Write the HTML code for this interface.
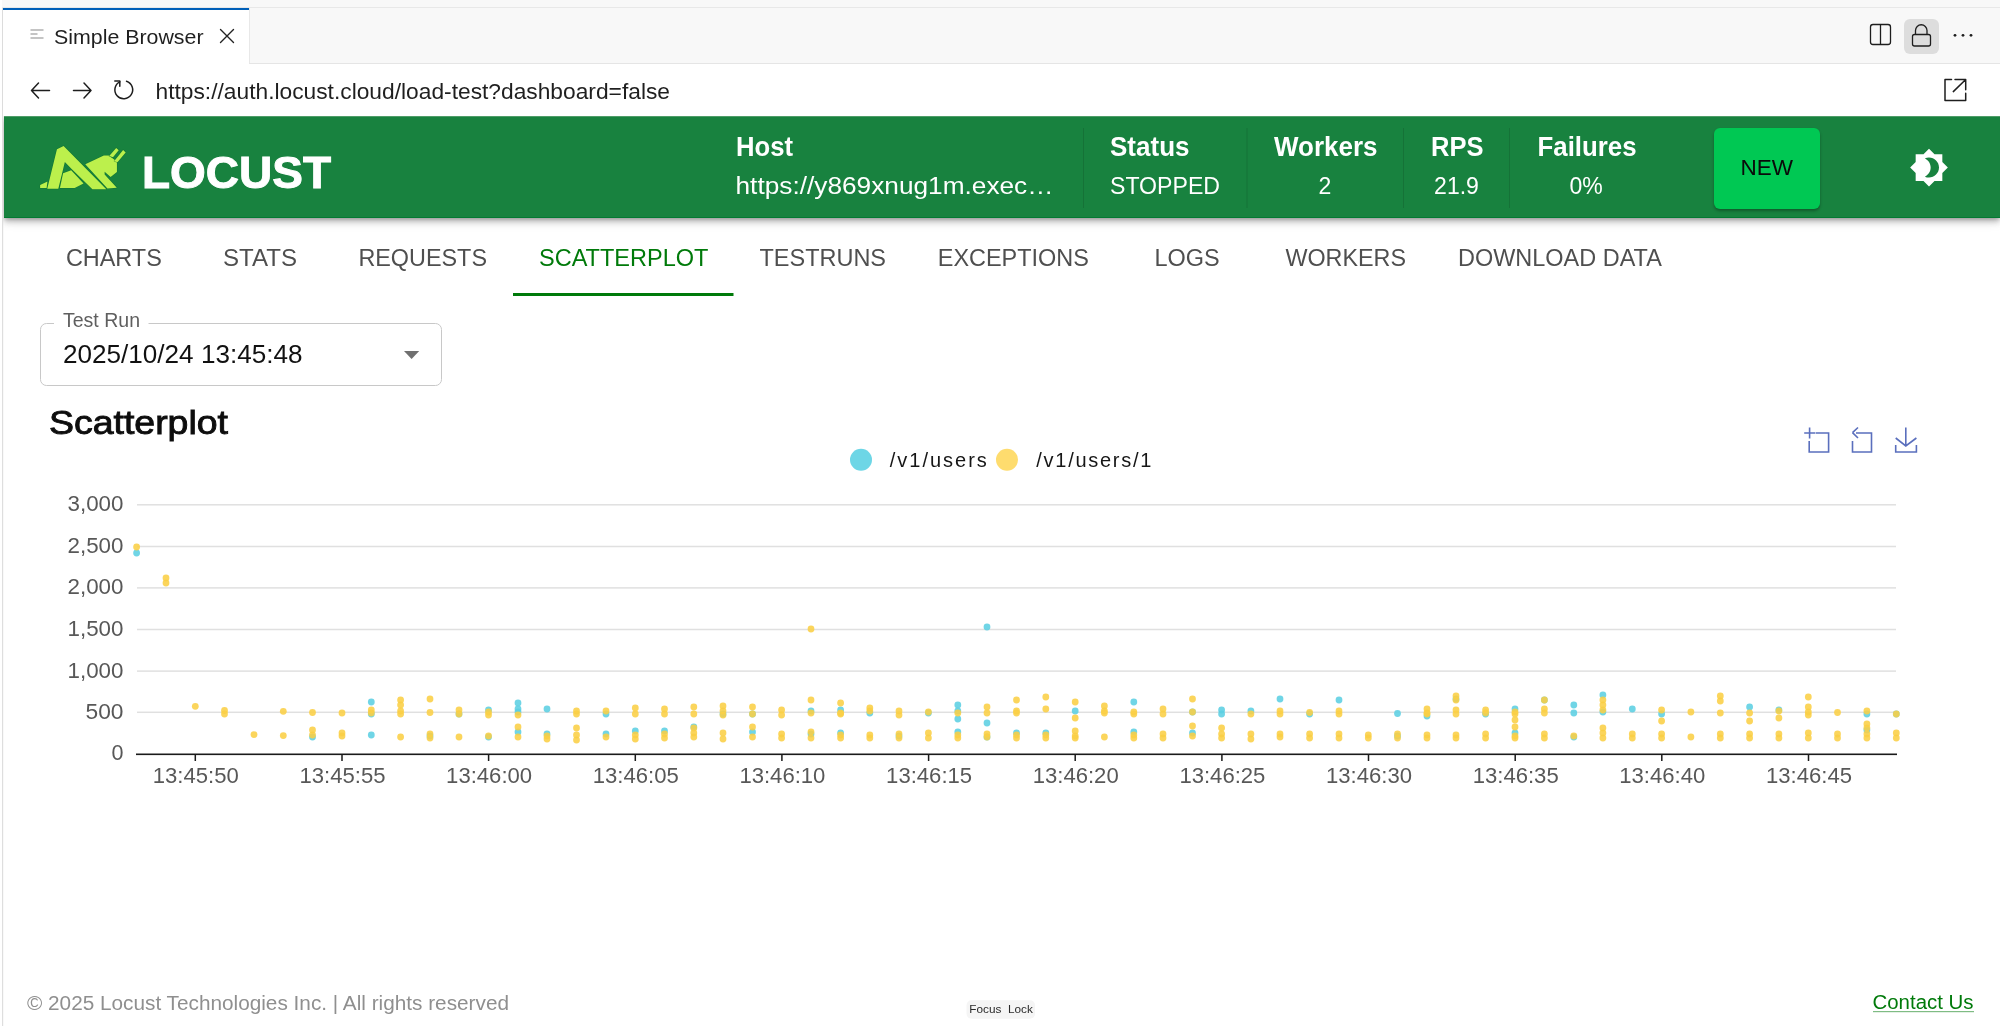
<!DOCTYPE html>
<html><head><meta charset="utf-8">
<style>
*{box-sizing:border-box;margin:0;padding:0}
html,body{width:2000px;height:1026px;overflow:hidden;background:#fff;font-family:"Liberation Sans",sans-serif}
#hdr{position:absolute;left:4px;top:116px;width:1996px;height:102px;clip-path:inset(0 -30px -40px -30px);background:#18823f;box-shadow:0 2px 4px -1px rgba(0,0,0,.25),0 4px 6px 0 rgba(0,0,0,.17),0 2px 12px 0 rgba(0,0,0,.14);border-top:1px solid #4f9d68;border-bottom:1px solid #027a32}
#new{position:absolute;left:1714px;top:128px;width:106px;height:80.5px;background:#00c853;border-radius:6px;box-shadow:0 2px 3px rgba(0,0,0,.3)}
svg{position:absolute;left:0;top:0;will-change:transform}
</style></head><body>
<svg width="2000" height="116" style="position:absolute;left:0;top:0" font-family="Liberation Sans">
<rect x="0" y="0" width="2000" height="64" fill="#f8f8f8"/>
<rect x="0" y="63" width="2000" height="1" fill="#e5e5e5"/>
<rect x="0" y="7" width="2000" height="1" fill="#e8e8e8"/>
<rect x="3" y="8" width="246" height="56" fill="#ffffff"/>
<rect x="2" y="8" width="247" height="2" fill="#005fb8"/>
<rect x="249" y="8" width="1" height="55" fill="#e8e8e8"/>
<rect x="3" y="64" width="1997" height="52" fill="#ffffff"/>
<rect x="0" y="0" width="2" height="1026" fill="#ffffff"/>
<rect x="2" y="8" width="1" height="1018" fill="#dcdcdc"/>
<g fill="#c4c4c4"><rect x="30.5" y="29" width="13" height="2"/><rect x="30.5" y="33" width="7" height="2"/><rect x="30.5" y="37" width="13" height="2"/></g>
<g stroke="#222" stroke-width="1.4" fill="none" stroke-linecap="round"><path d="M220.5 29.5 L233.5 42.5 M233.5 29.5 L220.5 42.5"/></g>
<g stroke="#1e1e1e" stroke-width="1.3" fill="none">
 <rect x="1870.5" y="24.5" width="20" height="20" rx="2.5"/>
 <path d="M1880.5 24.5 V44.5"/>
</g>
<rect x="1904" y="19" width="35" height="35" rx="6" fill="#dddddd"/>
<g stroke="#1e1e1e" stroke-width="1.3" fill="none">
 <rect x="1912.5" y="34.5" width="18" height="11.5" rx="2"/>
 <path d="M1915.5 34.5 V30.5 A5.75 5.75 0 0 1 1927 30.5 V34.5"/>
</g>
<g fill="#1e1e1e"><circle cx="1955" cy="35.3" r="1.4"/><circle cx="1963" cy="35.3" r="1.4"/><circle cx="1971" cy="35.3" r="1.4"/></g>
<g stroke="#1e1e1e" stroke-width="1.5" fill="none" stroke-linecap="round" stroke-linejoin="round">
 <path d="M31.5 90.5 H49.5 M38.5 83 L31.5 90.5 L38.5 98"/>
 <path d="M73.5 90.5 H91 M84 83 L91 90.5 L84 98"/>
 <path d="M126.5 81.3 A8.9 8.9 0 1 1 119.8 81.8"/>
 <path d="M114.8 81 H119.8 V86.2"/>
 <path d="M1951.5 79.5 H1945 V100.4 H1965.7 V93.2 M1955 79.5 H1965.7 V89.7 M1953.3 91.6 L1965.2 80"/>
</g>
<text x="54" y="44" font-size="21" fill="#1f1f1f" textLength="149.5" lengthAdjust="spacingAndGlyphs">Simple Browser</text><text x="155.5" y="98.5" font-size="22.5" fill="#1f1f1f" textLength="514.5" lengthAdjust="spacingAndGlyphs">https://auth.locust.cloud/load-test?dashboard=false</text></svg>
<div id="hdr"></div>
<div id="new"></div>
<svg style="position:absolute;left:30px;top:135px" width="110" height="65" viewBox="0 0 1736 1026">
<g fill="#bcf04c" stroke="#0e6f2a" stroke-width="16" stroke-opacity="0.55" paint-order="stroke" stroke-linejoin="round">
<path d="M160 790 L275 735 L262 835 L160 835 Z"/>
<path d="M272 850 L425 225 L530 172 L1205 855 L985 855 L665 545 L550 425 L447 850 Z"/>
<path d="M472 835 L522 605 L650 555 L845 765 L705 835 Z"/>
<path d="M872 462 L1165 322 L1242 322 L1372 418 L1372 585 L1272 662 L1178 580 L1178 625 L1370 832 L1222 845 Z"/>
<path d="M1250 330 L1360 205 L1400 240 L1310 350 Z"/>
<path d="M1330 410 L1470 235 L1510 275 L1380 430 Z"/>
</g></svg>
<svg width="2000" height="1026" style="position:absolute;left:0;top:0;top:0" font-family="Liberation Sans">
<rect x="0" y="116" width="2" height="910" fill="#ffffff"/>
<rect x="2" y="116" width="1.2" height="910" fill="#dedede"/>
<text x="142" y="187.5" font-size="45" fill="#ffffff" font-weight="bold" textLength="189" lengthAdjust="spacingAndGlyphs" stroke="#fff" stroke-width="1">LOCUST</text><text x="736" y="155.5" font-size="27" fill="#fff" font-weight="bold" textLength="57" lengthAdjust="spacingAndGlyphs">Host</text><text x="735.5" y="194" font-size="23" fill="#fff" textLength="318" lengthAdjust="spacingAndGlyphs">https://y869xnug1m.exec…</text><text x="1110" y="155.5" font-size="27" fill="#fff" font-weight="bold" textLength="79.5" lengthAdjust="spacingAndGlyphs">Status</text><text x="1110" y="193.5" font-size="23" fill="#fff" textLength="110" lengthAdjust="spacingAndGlyphs">STOPPED</text><text x="1274" y="155.5" font-size="27" fill="#fff" font-weight="bold" textLength="103.5" lengthAdjust="spacingAndGlyphs">Workers</text><text x="1325" y="193.5" font-size="23" fill="#fff" text-anchor="middle">2</text><text x="1431" y="155.5" font-size="27" fill="#fff" font-weight="bold" textLength="52.5" lengthAdjust="spacingAndGlyphs">RPS</text><text x="1456.5" y="193.5" font-size="23" fill="#fff" text-anchor="middle">21.9</text><text x="1537.5" y="155.5" font-size="27" fill="#fff" font-weight="bold" textLength="99" lengthAdjust="spacingAndGlyphs">Failures</text><text x="1586" y="193.5" font-size="23" fill="#fff" text-anchor="middle">0%</text><rect x="1083.0" y="128" width="1" height="80" fill="#000" fill-opacity="0.12"/><rect x="1246.5" y="128" width="1" height="80" fill="#000" fill-opacity="0.12"/><rect x="1403.0" y="128" width="1" height="80" fill="#000" fill-opacity="0.12"/><rect x="1509.0" y="128" width="1" height="80" fill="#000" fill-opacity="0.12"/><text x="1740.5" y="175" font-size="22.7" fill="#0a0a0a" textLength="52.5" lengthAdjust="spacingAndGlyphs">NEW</text><g transform="translate(1909,147.6) scale(1.6667)"><path fill="#fff" d="M20 8.69V4h-4.69L12 .69 8.69 4H4v4.69L.69 12 4 15.31V20h4.69L12 23.31 15.31 20H20v-4.69L23.31 12 20 8.69zM12 18c-.89 0-1.74-.2-2.5-.55C11.56 16.5 13 14.42 13 12s-1.44-4.5-3.5-5.45C10.26 6.2 11.11 6 12 6c3.31 0 6 2.69 6 6s-2.69 6-6 6z"/></g><text x="65.9" y="265.5" font-size="23.5" fill="#4f4f4f" textLength="95.9" lengthAdjust="spacingAndGlyphs">CHARTS</text><text x="223" y="265.5" font-size="23.5" fill="#4f4f4f" textLength="74" lengthAdjust="spacingAndGlyphs">STATS</text><text x="358.4" y="265.5" font-size="23.5" fill="#4f4f4f" textLength="128.6" lengthAdjust="spacingAndGlyphs">REQUESTS</text><text x="539" y="265.5" font-size="23.5" fill="#007a0a" textLength="169.4" lengthAdjust="spacingAndGlyphs">SCATTERPLOT</text><text x="759.5" y="265.5" font-size="23.5" fill="#4f4f4f" textLength="126.5" lengthAdjust="spacingAndGlyphs">TESTRUNS</text><text x="937.75" y="265.5" font-size="23.5" fill="#4f4f4f" textLength="151.2" lengthAdjust="spacingAndGlyphs">EXCEPTIONS</text><text x="1154.5" y="265.5" font-size="23.5" fill="#4f4f4f" textLength="65.2" lengthAdjust="spacingAndGlyphs">LOGS</text><text x="1285.4" y="265.5" font-size="23.5" fill="#4f4f4f" textLength="120.6" lengthAdjust="spacingAndGlyphs">WORKERS</text><text x="1458" y="265.5" font-size="23.5" fill="#4f4f4f" textLength="203.8" lengthAdjust="spacingAndGlyphs">DOWNLOAD DATA</text><rect x="513" y="293" width="220.5" height="3" fill="#007a0a"/><path d="M54 323.5 H46.5 A6 6 0 0 0 40.5 329.5 V379.5 A6 6 0 0 0 46.5 385.5 H435.5 A6 6 0 0 0 441.5 379.5 V329.5 A6 6 0 0 0 435.5 323.5 H148.5" fill="none" stroke="#c8c8c8" stroke-width="1"/><text x="63" y="326.8" font-size="19.5" fill="#5f5f5f" textLength="77" lengthAdjust="spacingAndGlyphs">Test Run</text><text x="63" y="362.8" font-size="26" fill="#111" textLength="239.5" lengthAdjust="spacingAndGlyphs">2025/10/24 13:45:48</text><path d="M404 351 H419.2 L411.6 359 Z" fill="#707070"/><text x="49" y="433.5" font-size="34" fill="#0d0d0d" textLength="179" lengthAdjust="spacingAndGlyphs" stroke="#0d0d0d" stroke-width="0.9">Scatterplot</text><circle cx="861" cy="459.7" r="11" fill="#6dd6e6"/><circle cx="1007" cy="459.7" r="11" fill="#fedc6e"/><text x="889.8" y="466.7" font-size="20" fill="#161616" textLength="97" lengthAdjust="spacing">/v1/users</text><text x="1036.3" y="466.7" font-size="20" fill="#161616" textLength="115" lengthAdjust="spacing">/v1/users/1</text><g stroke="#5a6fbd" stroke-width="1.6" fill="none">
<path d="M1804.2 433 H1815 M1809.6 427.6 V438.4 M1815.5 433 H1828.6 V452 H1809.2 V441"/>
<path d="M1856 433 H1871.5 V452 H1852.5 V441 M1852.5 432.7 L1858 427.5 M1852.5 432.7 L1858 438"/>
<path d="M1905.8 427.5 V446 M1895.7 438 L1905.8 446 L1916.4 438 M1895.7 445 V452 H1916.4 V445"/>
</g><rect x="137" y="504.05" width="1759" height="1.5" fill="#e0e0e0"/><text x="67.5" y="511.2" font-size="22" fill="#585858" textLength="56" lengthAdjust="spacingAndGlyphs">3,000</text><rect x="137" y="545.75" width="1759" height="1.5" fill="#e0e0e0"/><text x="67.5" y="552.9" font-size="22" fill="#585858" textLength="56" lengthAdjust="spacingAndGlyphs">2,500</text><rect x="137" y="587.15" width="1759" height="1.5" fill="#e0e0e0"/><text x="67.5" y="594.3" font-size="22" fill="#585858" textLength="56" lengthAdjust="spacingAndGlyphs">2,000</text><rect x="137" y="628.75" width="1759" height="1.5" fill="#e0e0e0"/><text x="67.5" y="635.9" font-size="22" fill="#585858" textLength="56" lengthAdjust="spacingAndGlyphs">1,500</text><rect x="137" y="670.35" width="1759" height="1.5" fill="#e0e0e0"/><text x="67.5" y="677.5" font-size="22" fill="#585858" textLength="56" lengthAdjust="spacingAndGlyphs">1,000</text><rect x="137" y="711.55" width="1759" height="1.5" fill="#e0e0e0"/><text x="85.5" y="718.6999999999999" font-size="22" fill="#585858" textLength="38" lengthAdjust="spacingAndGlyphs">500</text><text x="111.5" y="760.3" font-size="22" fill="#585858" textLength="12" lengthAdjust="spacingAndGlyphs">0</text><rect x="136" y="753.5" width="1761" height="1.6" fill="#1a1a1a"/><rect x="194.55" y="754" width="1.5" height="7" fill="#1a1a1a"/><text x="152.8" y="782.6" font-size="21.7" fill="#585858" textLength="86" lengthAdjust="spacingAndGlyphs">13:45:50</text><rect x="341.25" y="754" width="1.5" height="7" fill="#1a1a1a"/><text x="299.5" y="782.6" font-size="21.7" fill="#585858" textLength="86" lengthAdjust="spacingAndGlyphs">13:45:55</text><rect x="487.85" y="754" width="1.5" height="7" fill="#1a1a1a"/><text x="446.1" y="782.6" font-size="21.7" fill="#585858" textLength="86" lengthAdjust="spacingAndGlyphs">13:46:00</text><rect x="634.55" y="754" width="1.5" height="7" fill="#1a1a1a"/><text x="592.8" y="782.6" font-size="21.7" fill="#585858" textLength="86" lengthAdjust="spacingAndGlyphs">13:46:05</text><rect x="781.15" y="754" width="1.5" height="7" fill="#1a1a1a"/><text x="739.4" y="782.6" font-size="21.7" fill="#585858" textLength="86" lengthAdjust="spacingAndGlyphs">13:46:10</text><rect x="927.85" y="754" width="1.5" height="7" fill="#1a1a1a"/><text x="886.1" y="782.6" font-size="21.7" fill="#585858" textLength="86" lengthAdjust="spacingAndGlyphs">13:46:15</text><rect x="1074.45" y="754" width="1.5" height="7" fill="#1a1a1a"/><text x="1032.7" y="782.6" font-size="21.7" fill="#585858" textLength="86" lengthAdjust="spacingAndGlyphs">13:46:20</text><rect x="1221.15" y="754" width="1.5" height="7" fill="#1a1a1a"/><text x="1179.4" y="782.6" font-size="21.7" fill="#585858" textLength="86" lengthAdjust="spacingAndGlyphs">13:46:25</text><rect x="1367.75" y="754" width="1.5" height="7" fill="#1a1a1a"/><text x="1326.0" y="782.6" font-size="21.7" fill="#585858" textLength="86" lengthAdjust="spacingAndGlyphs">13:46:30</text><rect x="1514.45" y="754" width="1.5" height="7" fill="#1a1a1a"/><text x="1472.7" y="782.6" font-size="21.7" fill="#585858" textLength="86" lengthAdjust="spacingAndGlyphs">13:46:35</text><rect x="1661.05" y="754" width="1.5" height="7" fill="#1a1a1a"/><text x="1619.3" y="782.6" font-size="21.7" fill="#585858" textLength="86" lengthAdjust="spacingAndGlyphs">13:46:40</text><rect x="1807.75" y="754" width="1.5" height="7" fill="#1a1a1a"/><text x="1766.0" y="782.6" font-size="21.7" fill="#585858" textLength="86" lengthAdjust="spacingAndGlyphs">13:46:45</text><circle cx="136.6" cy="553" r="3.4" fill="#5ccfe2" fill-opacity="0.88"/>
<circle cx="312.5" cy="737" r="3.4" fill="#5ccfe2" fill-opacity="0.88"/>
<circle cx="371.3" cy="702" r="3.4" fill="#5ccfe2" fill-opacity="0.88"/>
<circle cx="371.3" cy="714" r="3.4" fill="#5ccfe2" fill-opacity="0.88"/>
<circle cx="371.3" cy="735" r="3.4" fill="#5ccfe2" fill-opacity="0.88"/>
<circle cx="430" cy="736" r="3.4" fill="#5ccfe2" fill-opacity="0.88"/>
<circle cx="459" cy="714" r="3.4" fill="#5ccfe2" fill-opacity="0.88"/>
<circle cx="488.5" cy="710" r="3.4" fill="#5ccfe2" fill-opacity="0.88"/>
<circle cx="488.5" cy="737" r="3.4" fill="#5ccfe2" fill-opacity="0.88"/>
<circle cx="518" cy="703" r="3.4" fill="#5ccfe2" fill-opacity="0.88"/>
<circle cx="518" cy="709" r="3.4" fill="#5ccfe2" fill-opacity="0.88"/>
<circle cx="518" cy="712" r="3.4" fill="#5ccfe2" fill-opacity="0.88"/>
<circle cx="518" cy="732" r="3.4" fill="#5ccfe2" fill-opacity="0.88"/>
<circle cx="547" cy="709" r="3.4" fill="#5ccfe2" fill-opacity="0.88"/>
<circle cx="547" cy="734" r="3.4" fill="#5ccfe2" fill-opacity="0.88"/>
<circle cx="606" cy="714" r="3.4" fill="#5ccfe2" fill-opacity="0.88"/>
<circle cx="606" cy="734" r="3.4" fill="#5ccfe2" fill-opacity="0.88"/>
<circle cx="635.3" cy="731" r="3.4" fill="#5ccfe2" fill-opacity="0.88"/>
<circle cx="664.5" cy="731" r="3.4" fill="#5ccfe2" fill-opacity="0.88"/>
<circle cx="693.8" cy="727" r="3.4" fill="#5ccfe2" fill-opacity="0.88"/>
<circle cx="723" cy="714" r="3.4" fill="#5ccfe2" fill-opacity="0.88"/>
<circle cx="752.5" cy="714" r="3.4" fill="#5ccfe2" fill-opacity="0.88"/>
<circle cx="752.5" cy="732" r="3.4" fill="#5ccfe2" fill-opacity="0.88"/>
<circle cx="811" cy="711" r="3.4" fill="#5ccfe2" fill-opacity="0.88"/>
<circle cx="811" cy="734" r="3.4" fill="#5ccfe2" fill-opacity="0.88"/>
<circle cx="840.6" cy="710" r="3.4" fill="#5ccfe2" fill-opacity="0.88"/>
<circle cx="840.6" cy="733" r="3.4" fill="#5ccfe2" fill-opacity="0.88"/>
<circle cx="869.8" cy="713" r="3.4" fill="#5ccfe2" fill-opacity="0.88"/>
<circle cx="899" cy="736" r="3.4" fill="#5ccfe2" fill-opacity="0.88"/>
<circle cx="928.4" cy="713" r="3.4" fill="#5ccfe2" fill-opacity="0.88"/>
<circle cx="957.8" cy="705" r="3.4" fill="#5ccfe2" fill-opacity="0.88"/>
<circle cx="957.8" cy="711" r="3.4" fill="#5ccfe2" fill-opacity="0.88"/>
<circle cx="957.8" cy="719" r="3.4" fill="#5ccfe2" fill-opacity="0.88"/>
<circle cx="957.8" cy="732" r="3.4" fill="#5ccfe2" fill-opacity="0.88"/>
<circle cx="987" cy="627" r="3.4" fill="#5ccfe2" fill-opacity="0.88"/>
<circle cx="987" cy="723" r="3.4" fill="#5ccfe2" fill-opacity="0.88"/>
<circle cx="987" cy="737" r="3.4" fill="#5ccfe2" fill-opacity="0.88"/>
<circle cx="1016.5" cy="733" r="3.4" fill="#5ccfe2" fill-opacity="0.88"/>
<circle cx="1045.8" cy="733" r="3.4" fill="#5ccfe2" fill-opacity="0.88"/>
<circle cx="1075.2" cy="711" r="3.4" fill="#5ccfe2" fill-opacity="0.88"/>
<circle cx="1133.8" cy="702" r="3.4" fill="#5ccfe2" fill-opacity="0.88"/>
<circle cx="1133.8" cy="732" r="3.4" fill="#5ccfe2" fill-opacity="0.88"/>
<circle cx="1192.5" cy="712" r="3.4" fill="#5ccfe2" fill-opacity="0.88"/>
<circle cx="1192.5" cy="733" r="3.4" fill="#5ccfe2" fill-opacity="0.88"/>
<circle cx="1221.6" cy="710" r="3.4" fill="#5ccfe2" fill-opacity="0.88"/>
<circle cx="1221.6" cy="714" r="3.4" fill="#5ccfe2" fill-opacity="0.88"/>
<circle cx="1250.9" cy="711" r="3.4" fill="#5ccfe2" fill-opacity="0.88"/>
<circle cx="1280" cy="699" r="3.4" fill="#5ccfe2" fill-opacity="0.88"/>
<circle cx="1309.6" cy="714" r="3.4" fill="#5ccfe2" fill-opacity="0.88"/>
<circle cx="1339" cy="700" r="3.4" fill="#5ccfe2" fill-opacity="0.88"/>
<circle cx="1397.5" cy="713.5" r="3.4" fill="#5ccfe2" fill-opacity="0.88"/>
<circle cx="1397.5" cy="736" r="3.4" fill="#5ccfe2" fill-opacity="0.88"/>
<circle cx="1427" cy="716" r="3.4" fill="#5ccfe2" fill-opacity="0.88"/>
<circle cx="1456" cy="699" r="3.4" fill="#5ccfe2" fill-opacity="0.88"/>
<circle cx="1485.6" cy="714" r="3.4" fill="#5ccfe2" fill-opacity="0.88"/>
<circle cx="1515" cy="709" r="3.4" fill="#5ccfe2" fill-opacity="0.88"/>
<circle cx="1515" cy="733" r="3.4" fill="#5ccfe2" fill-opacity="0.88"/>
<circle cx="1544.4" cy="700" r="3.4" fill="#5ccfe2" fill-opacity="0.88"/>
<circle cx="1573.8" cy="705" r="3.4" fill="#5ccfe2" fill-opacity="0.88"/>
<circle cx="1573.8" cy="713" r="3.4" fill="#5ccfe2" fill-opacity="0.88"/>
<circle cx="1573.8" cy="737" r="3.4" fill="#5ccfe2" fill-opacity="0.88"/>
<circle cx="1602.9" cy="695" r="3.4" fill="#5ccfe2" fill-opacity="0.88"/>
<circle cx="1602.9" cy="712" r="3.4" fill="#5ccfe2" fill-opacity="0.88"/>
<circle cx="1632.3" cy="709" r="3.4" fill="#5ccfe2" fill-opacity="0.88"/>
<circle cx="1661.6" cy="714" r="3.4" fill="#5ccfe2" fill-opacity="0.88"/>
<circle cx="1749.6" cy="707" r="3.4" fill="#5ccfe2" fill-opacity="0.88"/>
<circle cx="1778.9" cy="710" r="3.4" fill="#5ccfe2" fill-opacity="0.88"/>
<circle cx="1866.9" cy="714" r="3.4" fill="#5ccfe2" fill-opacity="0.88"/>
<circle cx="1866.9" cy="730" r="3.4" fill="#5ccfe2" fill-opacity="0.88"/>
<circle cx="1896.3" cy="714" r="3.4" fill="#5ccfe2" fill-opacity="0.88"/>
<circle cx="136.6" cy="547" r="3.4" fill="#fbcf45" fill-opacity="0.88"/>
<circle cx="166" cy="578" r="3.4" fill="#fbcf45" fill-opacity="0.88"/>
<circle cx="166" cy="583" r="3.4" fill="#fbcf45" fill-opacity="0.88"/>
<circle cx="195.3" cy="706.3" r="3.4" fill="#fbcf45" fill-opacity="0.88"/>
<circle cx="224.5" cy="710.5" r="3.4" fill="#fbcf45" fill-opacity="0.88"/>
<circle cx="224.5" cy="714" r="3.4" fill="#fbcf45" fill-opacity="0.88"/>
<circle cx="254" cy="734.6" r="3.4" fill="#fbcf45" fill-opacity="0.88"/>
<circle cx="283.3" cy="711.3" r="3.4" fill="#fbcf45" fill-opacity="0.88"/>
<circle cx="283.3" cy="735.6" r="3.4" fill="#fbcf45" fill-opacity="0.88"/>
<circle cx="312.5" cy="712.5" r="3.4" fill="#fbcf45" fill-opacity="0.88"/>
<circle cx="312.5" cy="730" r="3.4" fill="#fbcf45" fill-opacity="0.88"/>
<circle cx="312.5" cy="735" r="3.4" fill="#fbcf45" fill-opacity="0.88"/>
<circle cx="342" cy="713" r="3.4" fill="#fbcf45" fill-opacity="0.88"/>
<circle cx="342" cy="733" r="3.4" fill="#fbcf45" fill-opacity="0.88"/>
<circle cx="342" cy="736" r="3.4" fill="#fbcf45" fill-opacity="0.88"/>
<circle cx="371.3" cy="710" r="3.4" fill="#fbcf45" fill-opacity="0.88"/>
<circle cx="371.3" cy="713" r="3.4" fill="#fbcf45" fill-opacity="0.88"/>
<circle cx="400.6" cy="700" r="3.4" fill="#fbcf45" fill-opacity="0.88"/>
<circle cx="400.6" cy="705" r="3.4" fill="#fbcf45" fill-opacity="0.88"/>
<circle cx="400.6" cy="711" r="3.4" fill="#fbcf45" fill-opacity="0.88"/>
<circle cx="400.6" cy="714" r="3.4" fill="#fbcf45" fill-opacity="0.88"/>
<circle cx="400.6" cy="737" r="3.4" fill="#fbcf45" fill-opacity="0.88"/>
<circle cx="430" cy="699" r="3.4" fill="#fbcf45" fill-opacity="0.88"/>
<circle cx="430" cy="712.5" r="3.4" fill="#fbcf45" fill-opacity="0.88"/>
<circle cx="430" cy="734" r="3.4" fill="#fbcf45" fill-opacity="0.88"/>
<circle cx="430" cy="738" r="3.4" fill="#fbcf45" fill-opacity="0.88"/>
<circle cx="459" cy="710" r="3.4" fill="#fbcf45" fill-opacity="0.88"/>
<circle cx="459" cy="714" r="3.4" fill="#fbcf45" fill-opacity="0.88"/>
<circle cx="459" cy="737" r="3.4" fill="#fbcf45" fill-opacity="0.88"/>
<circle cx="488.5" cy="712" r="3.4" fill="#fbcf45" fill-opacity="0.88"/>
<circle cx="488.5" cy="715" r="3.4" fill="#fbcf45" fill-opacity="0.88"/>
<circle cx="488.5" cy="736" r="3.4" fill="#fbcf45" fill-opacity="0.88"/>
<circle cx="518" cy="715" r="3.4" fill="#fbcf45" fill-opacity="0.88"/>
<circle cx="518" cy="727" r="3.4" fill="#fbcf45" fill-opacity="0.88"/>
<circle cx="518" cy="737" r="3.4" fill="#fbcf45" fill-opacity="0.88"/>
<circle cx="547" cy="736" r="3.4" fill="#fbcf45" fill-opacity="0.88"/>
<circle cx="547" cy="739" r="3.4" fill="#fbcf45" fill-opacity="0.88"/>
<circle cx="576.5" cy="711" r="3.4" fill="#fbcf45" fill-opacity="0.88"/>
<circle cx="576.5" cy="714" r="3.4" fill="#fbcf45" fill-opacity="0.88"/>
<circle cx="576.5" cy="728" r="3.4" fill="#fbcf45" fill-opacity="0.88"/>
<circle cx="576.5" cy="735" r="3.4" fill="#fbcf45" fill-opacity="0.88"/>
<circle cx="576.5" cy="740" r="3.4" fill="#fbcf45" fill-opacity="0.88"/>
<circle cx="606" cy="711" r="3.4" fill="#fbcf45" fill-opacity="0.88"/>
<circle cx="606" cy="737" r="3.4" fill="#fbcf45" fill-opacity="0.88"/>
<circle cx="635.3" cy="708" r="3.4" fill="#fbcf45" fill-opacity="0.88"/>
<circle cx="635.3" cy="714" r="3.4" fill="#fbcf45" fill-opacity="0.88"/>
<circle cx="635.3" cy="735" r="3.4" fill="#fbcf45" fill-opacity="0.88"/>
<circle cx="635.3" cy="739" r="3.4" fill="#fbcf45" fill-opacity="0.88"/>
<circle cx="664.5" cy="709" r="3.4" fill="#fbcf45" fill-opacity="0.88"/>
<circle cx="664.5" cy="714" r="3.4" fill="#fbcf45" fill-opacity="0.88"/>
<circle cx="664.5" cy="734" r="3.4" fill="#fbcf45" fill-opacity="0.88"/>
<circle cx="664.5" cy="738" r="3.4" fill="#fbcf45" fill-opacity="0.88"/>
<circle cx="693.8" cy="707" r="3.4" fill="#fbcf45" fill-opacity="0.88"/>
<circle cx="693.8" cy="714" r="3.4" fill="#fbcf45" fill-opacity="0.88"/>
<circle cx="693.8" cy="728" r="3.4" fill="#fbcf45" fill-opacity="0.88"/>
<circle cx="693.8" cy="733" r="3.4" fill="#fbcf45" fill-opacity="0.88"/>
<circle cx="693.8" cy="737" r="3.4" fill="#fbcf45" fill-opacity="0.88"/>
<circle cx="723" cy="706" r="3.4" fill="#fbcf45" fill-opacity="0.88"/>
<circle cx="723" cy="711" r="3.4" fill="#fbcf45" fill-opacity="0.88"/>
<circle cx="723" cy="715" r="3.4" fill="#fbcf45" fill-opacity="0.88"/>
<circle cx="723" cy="733" r="3.4" fill="#fbcf45" fill-opacity="0.88"/>
<circle cx="723" cy="739" r="3.4" fill="#fbcf45" fill-opacity="0.88"/>
<circle cx="752.5" cy="707" r="3.4" fill="#fbcf45" fill-opacity="0.88"/>
<circle cx="752.5" cy="714" r="3.4" fill="#fbcf45" fill-opacity="0.88"/>
<circle cx="752.5" cy="727" r="3.4" fill="#fbcf45" fill-opacity="0.88"/>
<circle cx="752.5" cy="737" r="3.4" fill="#fbcf45" fill-opacity="0.88"/>
<circle cx="781.6" cy="710" r="3.4" fill="#fbcf45" fill-opacity="0.88"/>
<circle cx="781.6" cy="715" r="3.4" fill="#fbcf45" fill-opacity="0.88"/>
<circle cx="781.6" cy="734" r="3.4" fill="#fbcf45" fill-opacity="0.88"/>
<circle cx="781.6" cy="738" r="3.4" fill="#fbcf45" fill-opacity="0.88"/>
<circle cx="811" cy="629" r="3.4" fill="#fbcf45" fill-opacity="0.88"/>
<circle cx="811" cy="700" r="3.4" fill="#fbcf45" fill-opacity="0.88"/>
<circle cx="811" cy="713" r="3.4" fill="#fbcf45" fill-opacity="0.88"/>
<circle cx="811" cy="732" r="3.4" fill="#fbcf45" fill-opacity="0.88"/>
<circle cx="811" cy="738" r="3.4" fill="#fbcf45" fill-opacity="0.88"/>
<circle cx="840.6" cy="703" r="3.4" fill="#fbcf45" fill-opacity="0.88"/>
<circle cx="840.6" cy="713" r="3.4" fill="#fbcf45" fill-opacity="0.88"/>
<circle cx="840.6" cy="714" r="3.4" fill="#fbcf45" fill-opacity="0.88"/>
<circle cx="840.6" cy="735" r="3.4" fill="#fbcf45" fill-opacity="0.88"/>
<circle cx="840.6" cy="738" r="3.4" fill="#fbcf45" fill-opacity="0.88"/>
<circle cx="869.8" cy="708" r="3.4" fill="#fbcf45" fill-opacity="0.88"/>
<circle cx="869.8" cy="711" r="3.4" fill="#fbcf45" fill-opacity="0.88"/>
<circle cx="869.8" cy="735" r="3.4" fill="#fbcf45" fill-opacity="0.88"/>
<circle cx="869.8" cy="738" r="3.4" fill="#fbcf45" fill-opacity="0.88"/>
<circle cx="899" cy="711" r="3.4" fill="#fbcf45" fill-opacity="0.88"/>
<circle cx="899" cy="715" r="3.4" fill="#fbcf45" fill-opacity="0.88"/>
<circle cx="899" cy="734" r="3.4" fill="#fbcf45" fill-opacity="0.88"/>
<circle cx="899" cy="738" r="3.4" fill="#fbcf45" fill-opacity="0.88"/>
<circle cx="928.4" cy="712" r="3.4" fill="#fbcf45" fill-opacity="0.88"/>
<circle cx="928.4" cy="733" r="3.4" fill="#fbcf45" fill-opacity="0.88"/>
<circle cx="928.4" cy="738" r="3.4" fill="#fbcf45" fill-opacity="0.88"/>
<circle cx="957.8" cy="713" r="3.4" fill="#fbcf45" fill-opacity="0.88"/>
<circle cx="957.8" cy="735" r="3.4" fill="#fbcf45" fill-opacity="0.88"/>
<circle cx="957.8" cy="738" r="3.4" fill="#fbcf45" fill-opacity="0.88"/>
<circle cx="987" cy="707" r="3.4" fill="#fbcf45" fill-opacity="0.88"/>
<circle cx="987" cy="713" r="3.4" fill="#fbcf45" fill-opacity="0.88"/>
<circle cx="987" cy="734" r="3.4" fill="#fbcf45" fill-opacity="0.88"/>
<circle cx="987" cy="737" r="3.4" fill="#fbcf45" fill-opacity="0.88"/>
<circle cx="1016.5" cy="700" r="3.4" fill="#fbcf45" fill-opacity="0.88"/>
<circle cx="1016.5" cy="711" r="3.4" fill="#fbcf45" fill-opacity="0.88"/>
<circle cx="1016.5" cy="713" r="3.4" fill="#fbcf45" fill-opacity="0.88"/>
<circle cx="1016.5" cy="735" r="3.4" fill="#fbcf45" fill-opacity="0.88"/>
<circle cx="1016.5" cy="738" r="3.4" fill="#fbcf45" fill-opacity="0.88"/>
<circle cx="1045.8" cy="697" r="3.4" fill="#fbcf45" fill-opacity="0.88"/>
<circle cx="1045.8" cy="709" r="3.4" fill="#fbcf45" fill-opacity="0.88"/>
<circle cx="1045.8" cy="735" r="3.4" fill="#fbcf45" fill-opacity="0.88"/>
<circle cx="1045.8" cy="738" r="3.4" fill="#fbcf45" fill-opacity="0.88"/>
<circle cx="1075.2" cy="702" r="3.4" fill="#fbcf45" fill-opacity="0.88"/>
<circle cx="1075.2" cy="718" r="3.4" fill="#fbcf45" fill-opacity="0.88"/>
<circle cx="1075.2" cy="731" r="3.4" fill="#fbcf45" fill-opacity="0.88"/>
<circle cx="1075.2" cy="736" r="3.4" fill="#fbcf45" fill-opacity="0.88"/>
<circle cx="1075.2" cy="738" r="3.4" fill="#fbcf45" fill-opacity="0.88"/>
<circle cx="1104.4" cy="706" r="3.4" fill="#fbcf45" fill-opacity="0.88"/>
<circle cx="1104.4" cy="711" r="3.4" fill="#fbcf45" fill-opacity="0.88"/>
<circle cx="1104.4" cy="713" r="3.4" fill="#fbcf45" fill-opacity="0.88"/>
<circle cx="1104.4" cy="737" r="3.4" fill="#fbcf45" fill-opacity="0.88"/>
<circle cx="1133.8" cy="712" r="3.4" fill="#fbcf45" fill-opacity="0.88"/>
<circle cx="1133.8" cy="714" r="3.4" fill="#fbcf45" fill-opacity="0.88"/>
<circle cx="1133.8" cy="735" r="3.4" fill="#fbcf45" fill-opacity="0.88"/>
<circle cx="1133.8" cy="738" r="3.4" fill="#fbcf45" fill-opacity="0.88"/>
<circle cx="1163" cy="709" r="3.4" fill="#fbcf45" fill-opacity="0.88"/>
<circle cx="1163" cy="714" r="3.4" fill="#fbcf45" fill-opacity="0.88"/>
<circle cx="1163" cy="734" r="3.4" fill="#fbcf45" fill-opacity="0.88"/>
<circle cx="1163" cy="738" r="3.4" fill="#fbcf45" fill-opacity="0.88"/>
<circle cx="1192.5" cy="699" r="3.4" fill="#fbcf45" fill-opacity="0.88"/>
<circle cx="1192.5" cy="712" r="3.4" fill="#fbcf45" fill-opacity="0.88"/>
<circle cx="1192.5" cy="726" r="3.4" fill="#fbcf45" fill-opacity="0.88"/>
<circle cx="1192.5" cy="736" r="3.4" fill="#fbcf45" fill-opacity="0.88"/>
<circle cx="1221.6" cy="728" r="3.4" fill="#fbcf45" fill-opacity="0.88"/>
<circle cx="1221.6" cy="734" r="3.4" fill="#fbcf45" fill-opacity="0.88"/>
<circle cx="1221.6" cy="738" r="3.4" fill="#fbcf45" fill-opacity="0.88"/>
<circle cx="1250.9" cy="714" r="3.4" fill="#fbcf45" fill-opacity="0.88"/>
<circle cx="1250.9" cy="734" r="3.4" fill="#fbcf45" fill-opacity="0.88"/>
<circle cx="1250.9" cy="739" r="3.4" fill="#fbcf45" fill-opacity="0.88"/>
<circle cx="1280" cy="711" r="3.4" fill="#fbcf45" fill-opacity="0.88"/>
<circle cx="1280" cy="714" r="3.4" fill="#fbcf45" fill-opacity="0.88"/>
<circle cx="1280" cy="734" r="3.4" fill="#fbcf45" fill-opacity="0.88"/>
<circle cx="1280" cy="737" r="3.4" fill="#fbcf45" fill-opacity="0.88"/>
<circle cx="1309.6" cy="712.5" r="3.4" fill="#fbcf45" fill-opacity="0.88"/>
<circle cx="1309.6" cy="734" r="3.4" fill="#fbcf45" fill-opacity="0.88"/>
<circle cx="1309.6" cy="738" r="3.4" fill="#fbcf45" fill-opacity="0.88"/>
<circle cx="1339" cy="711" r="3.4" fill="#fbcf45" fill-opacity="0.88"/>
<circle cx="1339" cy="714" r="3.4" fill="#fbcf45" fill-opacity="0.88"/>
<circle cx="1339" cy="734" r="3.4" fill="#fbcf45" fill-opacity="0.88"/>
<circle cx="1339" cy="738" r="3.4" fill="#fbcf45" fill-opacity="0.88"/>
<circle cx="1368.3" cy="735" r="3.4" fill="#fbcf45" fill-opacity="0.88"/>
<circle cx="1368.3" cy="738" r="3.4" fill="#fbcf45" fill-opacity="0.88"/>
<circle cx="1397.5" cy="734" r="3.4" fill="#fbcf45" fill-opacity="0.88"/>
<circle cx="1397.5" cy="738" r="3.4" fill="#fbcf45" fill-opacity="0.88"/>
<circle cx="1427" cy="709" r="3.4" fill="#fbcf45" fill-opacity="0.88"/>
<circle cx="1427" cy="713" r="3.4" fill="#fbcf45" fill-opacity="0.88"/>
<circle cx="1427" cy="714" r="3.4" fill="#fbcf45" fill-opacity="0.88"/>
<circle cx="1427" cy="735" r="3.4" fill="#fbcf45" fill-opacity="0.88"/>
<circle cx="1427" cy="738" r="3.4" fill="#fbcf45" fill-opacity="0.88"/>
<circle cx="1456" cy="696" r="3.4" fill="#fbcf45" fill-opacity="0.88"/>
<circle cx="1456" cy="700" r="3.4" fill="#fbcf45" fill-opacity="0.88"/>
<circle cx="1456" cy="710" r="3.4" fill="#fbcf45" fill-opacity="0.88"/>
<circle cx="1456" cy="714" r="3.4" fill="#fbcf45" fill-opacity="0.88"/>
<circle cx="1456" cy="735" r="3.4" fill="#fbcf45" fill-opacity="0.88"/>
<circle cx="1456" cy="738" r="3.4" fill="#fbcf45" fill-opacity="0.88"/>
<circle cx="1485.6" cy="710" r="3.4" fill="#fbcf45" fill-opacity="0.88"/>
<circle cx="1485.6" cy="713" r="3.4" fill="#fbcf45" fill-opacity="0.88"/>
<circle cx="1485.6" cy="734" r="3.4" fill="#fbcf45" fill-opacity="0.88"/>
<circle cx="1485.6" cy="738" r="3.4" fill="#fbcf45" fill-opacity="0.88"/>
<circle cx="1515" cy="712" r="3.4" fill="#fbcf45" fill-opacity="0.88"/>
<circle cx="1515" cy="714" r="3.4" fill="#fbcf45" fill-opacity="0.88"/>
<circle cx="1515" cy="720" r="3.4" fill="#fbcf45" fill-opacity="0.88"/>
<circle cx="1515" cy="727" r="3.4" fill="#fbcf45" fill-opacity="0.88"/>
<circle cx="1515" cy="736" r="3.4" fill="#fbcf45" fill-opacity="0.88"/>
<circle cx="1515" cy="738" r="3.4" fill="#fbcf45" fill-opacity="0.88"/>
<circle cx="1544.4" cy="700" r="3.4" fill="#fbcf45" fill-opacity="0.88"/>
<circle cx="1544.4" cy="709" r="3.4" fill="#fbcf45" fill-opacity="0.88"/>
<circle cx="1544.4" cy="713" r="3.4" fill="#fbcf45" fill-opacity="0.88"/>
<circle cx="1544.4" cy="734" r="3.4" fill="#fbcf45" fill-opacity="0.88"/>
<circle cx="1544.4" cy="738" r="3.4" fill="#fbcf45" fill-opacity="0.88"/>
<circle cx="1573.8" cy="736" r="3.4" fill="#fbcf45" fill-opacity="0.88"/>
<circle cx="1602.9" cy="700" r="3.4" fill="#fbcf45" fill-opacity="0.88"/>
<circle cx="1602.9" cy="705" r="3.4" fill="#fbcf45" fill-opacity="0.88"/>
<circle cx="1602.9" cy="710" r="3.4" fill="#fbcf45" fill-opacity="0.88"/>
<circle cx="1602.9" cy="728" r="3.4" fill="#fbcf45" fill-opacity="0.88"/>
<circle cx="1602.9" cy="733" r="3.4" fill="#fbcf45" fill-opacity="0.88"/>
<circle cx="1602.9" cy="738" r="3.4" fill="#fbcf45" fill-opacity="0.88"/>
<circle cx="1632.3" cy="734" r="3.4" fill="#fbcf45" fill-opacity="0.88"/>
<circle cx="1632.3" cy="738" r="3.4" fill="#fbcf45" fill-opacity="0.88"/>
<circle cx="1661.6" cy="710" r="3.4" fill="#fbcf45" fill-opacity="0.88"/>
<circle cx="1661.6" cy="721" r="3.4" fill="#fbcf45" fill-opacity="0.88"/>
<circle cx="1661.6" cy="734" r="3.4" fill="#fbcf45" fill-opacity="0.88"/>
<circle cx="1661.6" cy="738" r="3.4" fill="#fbcf45" fill-opacity="0.88"/>
<circle cx="1690.9" cy="712" r="3.4" fill="#fbcf45" fill-opacity="0.88"/>
<circle cx="1690.9" cy="737" r="3.4" fill="#fbcf45" fill-opacity="0.88"/>
<circle cx="1720.3" cy="696" r="3.4" fill="#fbcf45" fill-opacity="0.88"/>
<circle cx="1720.3" cy="701" r="3.4" fill="#fbcf45" fill-opacity="0.88"/>
<circle cx="1720.3" cy="713" r="3.4" fill="#fbcf45" fill-opacity="0.88"/>
<circle cx="1720.3" cy="734" r="3.4" fill="#fbcf45" fill-opacity="0.88"/>
<circle cx="1720.3" cy="738" r="3.4" fill="#fbcf45" fill-opacity="0.88"/>
<circle cx="1749.6" cy="713" r="3.4" fill="#fbcf45" fill-opacity="0.88"/>
<circle cx="1749.6" cy="721" r="3.4" fill="#fbcf45" fill-opacity="0.88"/>
<circle cx="1749.6" cy="734" r="3.4" fill="#fbcf45" fill-opacity="0.88"/>
<circle cx="1749.6" cy="738" r="3.4" fill="#fbcf45" fill-opacity="0.88"/>
<circle cx="1778.9" cy="711" r="3.4" fill="#fbcf45" fill-opacity="0.88"/>
<circle cx="1778.9" cy="718" r="3.4" fill="#fbcf45" fill-opacity="0.88"/>
<circle cx="1778.9" cy="734" r="3.4" fill="#fbcf45" fill-opacity="0.88"/>
<circle cx="1778.9" cy="738" r="3.4" fill="#fbcf45" fill-opacity="0.88"/>
<circle cx="1808.3" cy="697" r="3.4" fill="#fbcf45" fill-opacity="0.88"/>
<circle cx="1808.3" cy="707" r="3.4" fill="#fbcf45" fill-opacity="0.88"/>
<circle cx="1808.3" cy="712" r="3.4" fill="#fbcf45" fill-opacity="0.88"/>
<circle cx="1808.3" cy="715" r="3.4" fill="#fbcf45" fill-opacity="0.88"/>
<circle cx="1808.3" cy="733" r="3.4" fill="#fbcf45" fill-opacity="0.88"/>
<circle cx="1808.3" cy="738" r="3.4" fill="#fbcf45" fill-opacity="0.88"/>
<circle cx="1837.5" cy="712.5" r="3.4" fill="#fbcf45" fill-opacity="0.88"/>
<circle cx="1837.5" cy="734" r="3.4" fill="#fbcf45" fill-opacity="0.88"/>
<circle cx="1837.5" cy="738" r="3.4" fill="#fbcf45" fill-opacity="0.88"/>
<circle cx="1866.9" cy="711" r="3.4" fill="#fbcf45" fill-opacity="0.88"/>
<circle cx="1866.9" cy="724" r="3.4" fill="#fbcf45" fill-opacity="0.88"/>
<circle cx="1866.9" cy="728" r="3.4" fill="#fbcf45" fill-opacity="0.88"/>
<circle cx="1866.9" cy="734" r="3.4" fill="#fbcf45" fill-opacity="0.88"/>
<circle cx="1866.9" cy="738" r="3.4" fill="#fbcf45" fill-opacity="0.88"/>
<circle cx="1896.3" cy="714" r="3.4" fill="#fbcf45" fill-opacity="0.88"/>
<circle cx="1896.3" cy="733" r="3.4" fill="#fbcf45" fill-opacity="0.88"/>
<circle cx="1896.3" cy="738" r="3.4" fill="#fbcf45" fill-opacity="0.88"/><text x="27" y="1009.5" font-size="20" fill="#8f8f8f" textLength="482" lengthAdjust="spacingAndGlyphs">© 2025 Locust Technologies Inc. | All rights reserved</text><text x="1872.5" y="1009.3" font-size="20" fill="#007a0a" textLength="101" lengthAdjust="spacingAndGlyphs">Contact Us</text><rect x="1873" y="1011" width="101" height="1.2" fill="#007a0a" fill-opacity="0.5"/><rect x="966.5" y="1000.3" width="68.5" height="18.5" rx="5" fill="#f5f5f5"/><text x="969.3" y="1013.3" font-size="11.8" fill="#2a2a2a" textLength="63.5" lengthAdjust="spacingAndGlyphs">Focus&#160;&#160;Lock</text>
</svg>
</body></html>
